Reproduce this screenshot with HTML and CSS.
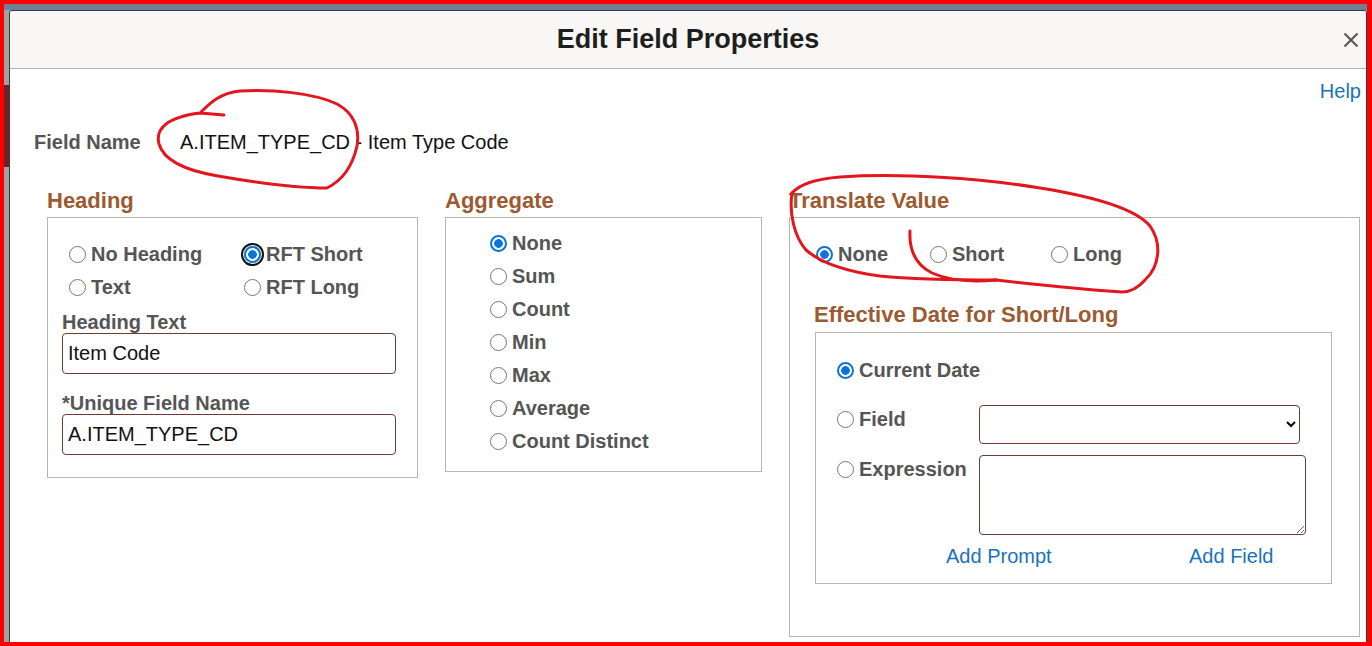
FILE: index.html
```html
<!DOCTYPE html>
<html lang="en">
<head>
    <meta charset="UTF-8">
    <title>Edit Field Properties</title>
    <link rel="stylesheet" href="styles.css">
</head>
<body>

<div class="frame">
    <div class="dialog">
        <div class="dlg-header">
            <span></span>
            <h1 class="dlg-title">Edit Field Properties</h1>
            <button class="close-btn" title="Close">
                <svg width="16" height="16" viewBox="0 0 16 16"><path d="M1.5 1.5 L14.5 14.5 M14.5 1.5 L1.5 14.5" stroke="#555" stroke-width="2" fill="none"/></svg>
            </button>
        </div>

        <div class="dlg-body">
            <div class="help-row"><a href="#" class="link">Help</a></div>

            <div class="field-name-row">
                <span class="lbl name-lbl">Field Name</span>
                <span class="field-value">A.ITEM_TYPE_CD - Item Type Code</span>
            </div>

            <div class="sections">
                <!-- Heading -->
                <div class="section sec-heading">
                    <h2 class="sec-title">Heading</h2>
                    <div class="group-box heading-box">
                        <div class="radio-grid">
                            <label class="radio"><input type="radio" name="hdg">No Heading</label>
                            <label class="radio"><input type="radio" name="hdg" class="focused" checked>RFT Short</label>
                            <label class="radio"><input type="radio" name="hdg">Text</label>
                            <label class="radio"><input type="radio" name="hdg">RFT Long</label>
                        </div>
                        <div class="lbl field-lbl first">Heading Text</div>
                        <input type="text" class="txt" value="Item Code">
                        <div class="lbl field-lbl">*Unique Field Name</div>
                        <input type="text" class="txt" value="A.ITEM_TYPE_CD">
                    </div>
                </div>

                <!-- Aggregate -->
                <div class="section sec-aggregate">
                    <h2 class="sec-title">Aggregate</h2>
                    <div class="group-box agg-box">
                        <label class="radio"><input type="radio" name="agg" checked>None</label>
                        <label class="radio"><input type="radio" name="agg">Sum</label>
                        <label class="radio"><input type="radio" name="agg">Count</label>
                        <label class="radio"><input type="radio" name="agg">Min</label>
                        <label class="radio"><input type="radio" name="agg">Max</label>
                        <label class="radio"><input type="radio" name="agg">Average</label>
                        <label class="radio"><input type="radio" name="agg">Count Distinct</label>
                    </div>
                </div>

                <!-- Translate Value -->
                <div class="section sec-translate">
                    <h2 class="sec-title">Translate Value</h2>
                    <div class="group-box trans-box">
                        <div class="trans-row">
                            <label class="radio"><input type="radio" name="trv" checked>None</label>
                            <label class="radio"><input type="radio" name="trv">Short</label>
                            <label class="radio"><input type="radio" name="trv">Long</label>
                        </div>
                        <h2 class="sec-title eff-title">Effective Date for Short/Long</h2>
                        <div class="group-box eff-box">
                            <label class="radio"><input type="radio" name="eff" checked>Current Date</label>
                            <div class="eff-grid">
                                <label class="radio tall"><input type="radio" name="eff">Field</label>
                                <select class="sel"><option></option></select>
                                <label class="radio tall"><input type="radio" name="eff">Expression</label>
                                <textarea class="expr"></textarea>
                            </div>
                            <div class="eff-links">
                                <a href="#" class="link">Add Prompt</a>
                                <a href="#" class="link">Add Field</a>
                            </div>
                        </div>
                    </div>
                </div>
            </div>
        </div>
    </div>
</div>

<!-- red pen marks drawn over the screenshot -->
<svg class="marks" width="1372" height="646" viewBox="0 0 1372 646">
    <path d="M224 115 L200 113 C210 103 220 93 240 91 C272 89 314 93 337 104 C354 113 360 129 357 146 C353 164 343 180 327 188 C300 188 258 183 218 176 C188 171 164 161 159 144 C155 129 167 117 200 113"/>
    <path d="M792 193 C800 184 815 179 840 177 C900 173 980 178 1040 188 C1090 196 1135 208 1150 226 C1162 243 1160 266 1145 280 C1138 288 1130 292 1122 292 C1090 290 1040 285 996 280"/>
    <path d="M792 193 C789 213 794 236 806 250 C822 264 850 272 880 276 C920 280 960 280 996 280"/>
    <path d="M910 231 C909 250 916 265 932 273 C950 281 975 282 996 280"/>
</svg>

</body>
</html>
```

FILE: styles.css
```css
body {
    margin: 0;
    position: relative;
    font-family: "Liberation Sans", Arial, sans-serif;
    color: #555;
}
.frame {
    width: 1372px;
    height: 646px;
    box-sizing: border-box;
    border-style: solid;
    border-color: #ff0000;
    border-width: 4px 5px 4px 4px;
    padding: 6px 0 0 5px;
    overflow: hidden;
    background-color: #a2a2a2;
    background-image: linear-gradient(#707f93, #707f93), linear-gradient(#6c2228, #6c2228);
    background-size: 100% 6px, 5px 82px;
    background-position: 0 0, 0 81px;
    background-repeat: no-repeat;
}
.dialog {
    width: 1358px;
    height: 700px;
    box-sizing: border-box;
    background: #fff;
    border: 1px solid #3a3a3a;
    border-radius: 3px 3px 0 0;
}
.dlg-header {
    height: 58px;
    box-sizing: border-box;
    background: #f8f7f5;
    border-bottom: 1px solid #b8b0a6;
    border-radius: 3px 3px 0 0;
    display: grid;
    grid-template-columns: 1fr auto 1fr;
    align-items: center;
}
.dlg-title {
    margin: 0;
    font-size: 27px;
    font-weight: bold;
    color: #1e1e1e;
}
.close-btn {
    justify-self: end;
    margin-right: 7px;
    padding: 0;
    border: none;
    background: none;
    width: 16px;
    height: 16px;
    display: flex;
}
.dlg-body {
    padding: 10px 5px 0 0;
}
.link {
    color: #1a73b8;
    text-decoration: none;
    font-size: 20px;
}
.help-row {
    text-align: right;
    line-height: 24px;
}
.lbl {
    font-size: 20px;
    font-weight: bold;
    color: #555;
}
.field-name-row {
    margin-top: 25px;
    padding-left: 24px;
    display: flex;
    line-height: 24px;
}
.name-lbl {
    flex: 0 0 146px;
}
.field-value {
    font-size: 20px;
    color: #111;
}
.sections {
    margin-top: 34px;
    padding-left: 37px;
    display: flex;
    align-items: flex-start;
    gap: 27px;
}
.sec-title {
    margin: 0 0 3px;
    font-size: 22px;
    line-height: 26px;
    font-weight: bold;
    color: #9c5a31;
}
.sec-heading { width: 371px; }
.sec-aggregate { width: 317px; }
.sec-translate { width: 571px; }
.group-box {
    border: 1px solid #bab5af;
    box-sizing: border-box;
}
.radio {
    display: flex;
    align-items: center;
    gap: 5px;
    height: 33px;
    font-size: 20px;
    font-weight: bold;
    color: #555;
    white-space: nowrap;
}
.radio input {
    -webkit-appearance: none;
    appearance: none;
    margin: 0;
    width: 17px;
    height: 17px;
    flex: none;
    box-sizing: border-box;
    border: 1px solid #767676;
    border-radius: 50%;
    background: #fff;
}
.radio input:checked {
    border: 2px solid #0a74da;
    background: radial-gradient(circle, #0a74da 0 4px, #fff 4.6px);
}
.radio input.focused {
    box-shadow: 0 0 0 1px #fff, 0 0 0 3px #111;
}
.heading-box {
    padding: 20px 21px 22px 14px;
}
.radio-grid {
    margin-left: 7px;
    display: grid;
    grid-template-columns: 175px auto;
}
.field-lbl {
    line-height: 20px;
    margin-top: 19px;
}
.field-lbl.first {
    margin-top: 8px;
}
.txt {
    display: block;
    margin-top: 1px;
    width: 334px;
    height: 41px;
    box-sizing: border-box;
    border: 1px solid #6e3c33;
    border-radius: 4px;
    padding: 0 5px;
    font-family: "Liberation Sans", Arial, sans-serif;
    font-size: 20px;
    color: #111;
}
.agg-box {
    padding: 9px 0 13px 44px;
}
.trans-box {
    height: 420px;
    padding: 20px 0 0 25px;
}
.trans-row {
    display: grid;
    grid-template-columns: 114px 121px auto;
    margin-left: 1px;
}
.eff-title {
    margin-top: 31px;
    margin-bottom: 4px;
    margin-left: -1px;
}
.eff-box {
    width: 517px;
    padding: 24px 0 16px 21px;
}
.eff-box > .radio {
    height: 26px;
}
.eff-grid {
    margin-top: 22px;
    display: grid;
    grid-template-columns: 142px auto;
    row-gap: 11px;
    align-items: start;
}
.radio.tall {
    height: 28px;
}
.sel {
    width: 321px;
    height: 39px;
    border: 1px solid #6e3c33;
    border-radius: 4px;
    background: #fff;
    font-family: "Liberation Sans", Arial, sans-serif;
    font-size: 20px;
}
.expr {
    width: 327px;
    height: 80px;
    box-sizing: border-box;
    margin: 0;
    border: 1px solid #6e3c33;
    border-radius: 4px;
    display: block;
}
.eff-links {
    margin-top: 10px;
    padding-left: 109px;
    display: grid;
    grid-template-columns: 243px auto;
    line-height: 22px;
}
.marks {
    position: absolute;
    left: 0;
    top: 0;
    pointer-events: none;
}
.marks path {
    fill: none;
    stroke: #e3161d;
    stroke-width: 3;
    stroke-linecap: round;
    stroke-linejoin: round;
}
```
